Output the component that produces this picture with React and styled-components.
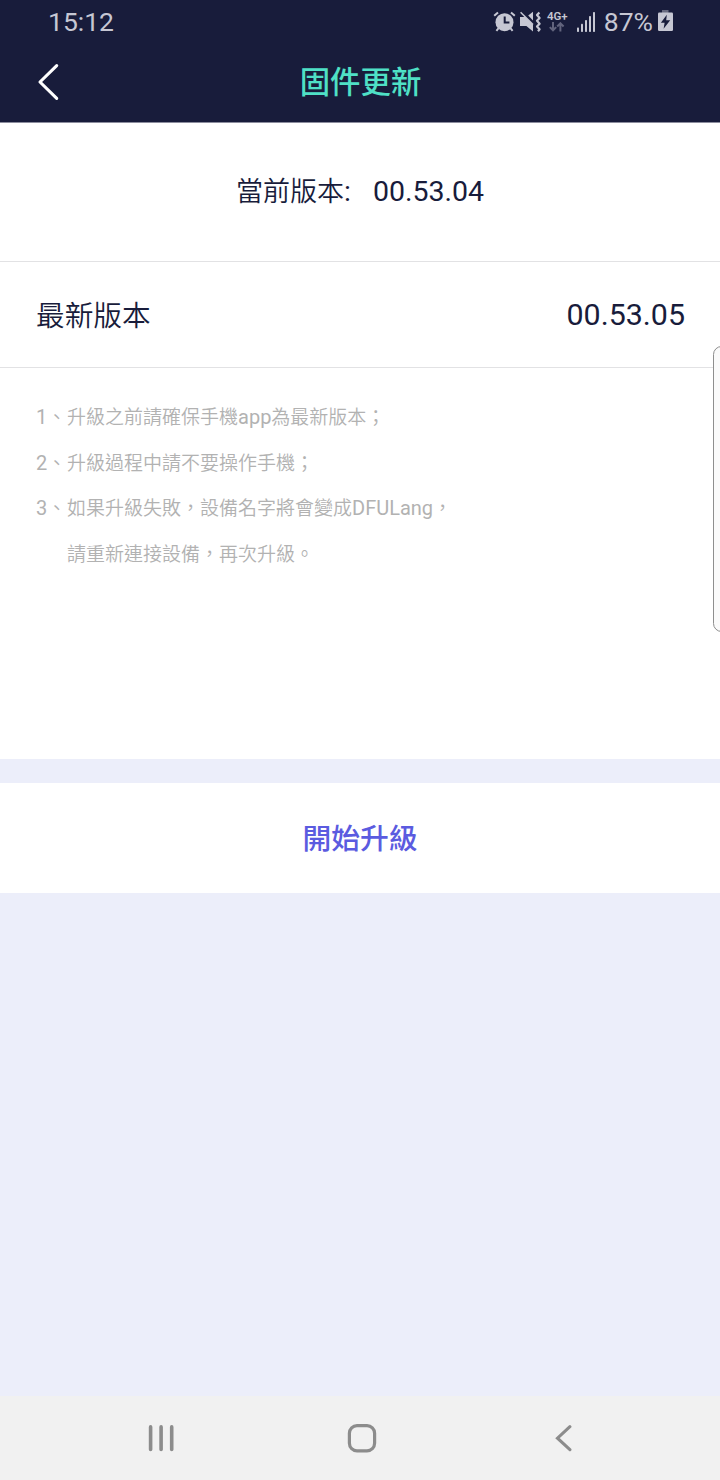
import React from 'react';
import styled, { createGlobalStyle } from 'styled-components';

const GlobalStyle = createGlobalStyle`
    * {
        box-sizing: border-box;
    }

    body {
        margin: 0;
        background-color: #eceefa;
        font-family: Roboto, 'Noto Sans CJK TC', sans-serif;
    }
`;

/* Status bar icons ----------------- */
const AlarmIcon = () => (
    <svg width="23" height="22" viewBox="0 0 23 22" fill="none">
        <circle cx="11.5" cy="11.2" r="9" fill="#c6c7d3" />
        <path d="M1.2 4.8 5 1.4M21.8 4.8 18 1.4M5.6 17.2 3.4 19.8M17.4 17.2l2.2 2.6" stroke="#c6c7d3" strokeWidth="2" />
        <path d="M11.7 5.6v5.9h4.7" stroke="#181c3b" strokeWidth="2" />
    </svg>
);

const VibrateIcon = () => (
    <svg width="23" height="22" viewBox="0 0 23 22" fill="none">
        <path d="M1 6h5.4L14 13.6v6.8L7.4 15H1z" fill="#c6c7d3" />
        <path d="M9.2 4.6 14 .8v8.6z" fill="#c6c7d3" />
        <path d="M1.6 1.2 14 13.6" stroke="#c6c7d3" strokeWidth="1.5" />
        <path d="M20.4 1.4 18 4l2.6 2.9L18 9.8l2.6 2.9-2.6 2.9 2.6 2.7-1.6 2" stroke="#c6c7d3" strokeWidth="2.2" strokeLinejoin="round" />
    </svg>
);

const DataArrows = () => (
    <svg width="16" height="10" viewBox="0 0 16 10" fill="none" stroke="#62647d" strokeWidth="2">
        <path d="M4 0v8M.8 5.1 4 8.3l3.2-3.2M11.4 9.5V1.5M8.2 4.5l3.2-3.2 3.2 3.2" />
    </svg>
);

const SignalIcon = () => (
    <svg width="18" height="20" viewBox="0 0 18 20" fill="#c6c7d3">
        <rect x="0" y="15.5" width="2" height="4.5" rx=".7" />
        <rect x="4" y="11.8" width="2" height="8.2" rx=".7" />
        <rect x="8" y="8" width="2" height="12" rx=".7" />
        <rect x="12" y="4" width="2" height="16" rx=".7" />
        <rect x="16" y="0" width="2" height="20" rx=".7" />
    </svg>
);

const BatteryIcon = () => (
    <svg width="15" height="23" viewBox="0 0 15 23">
        <path d="M4 0h6.5v3H4z" fill="#686a80" />
        <path d="M1.2 2.5H13.8Q15 2.5 15 3.7V19.8Q15 21 13.8 21H1.2Q0 21 0 19.8V3.7Q0 2.5 1.2 2.5z" fill="#c6c7d3" />
        <path d="M8.8 4.8 2.9 12.8H6.6L5.6 18.8 12.2 10.3H8.2z" fill="#181c3b" />
    </svg>
);

/* Notes mix Chinese with latin words, latin is set a bit larger */
const MixedText = ({ text }) =>
    text.split(/([A-Za-z0-9]+)/).map((part, i) =>
        i % 2 ? <Latin key={i}>{part}</Latin> : part
    );

const notes = [
    { number: '1', text: '升級之前請確保手機app為最新版本；' },
    { number: '2', text: '升級過程中請不要操作手機；' },
    { number: '3', text: '如果升級失敗，設備名字將會變成DFULang，' },
    { text: '請重新連接設備，再次升級。' },
];

const App = () => {
    return (
        <Screen>
            <GlobalStyle />
            <StatusBar>
                <StatusText>15:12</StatusText>
                <StatusIcons>
                    <AlarmIcon />
                    <VibrateIcon />
                    <Network>
                        <NetworkLabel>4G+</NetworkLabel>
                        <DataArrows />
                    </Network>
                    <SignalIcon />
                    <StatusText $level>87%</StatusText>
                    <BatteryIcon />
                </StatusIcons>
            </StatusBar>
            <Header>
                <BackButton aria-label="返回">
                    <svg width="24" height="38" viewBox="0 0 24 38" fill="none" stroke="#fff" strokeWidth="3.1" strokeLinecap="round" strokeLinejoin="round">
                        <path d="M20.7 2.6 4 19 20.7 35.4" />
                    </svg>
                </BackButton>
                <Title>固件更新</Title>
            </Header>
            <CurrentVersion>
                <CurrentLabel>當前版本<Colon>:</Colon></CurrentLabel>
                <Version $size="28.5px">00.53.04</Version>
            </CurrentVersion>
            <LatestVersion>
                <LatestLabel>最新版本</LatestLabel>
                <Version $size="30.4px">00.53.05</Version>
            </LatestVersion>
            <Notes>
                {notes.map((note) => (
                    <Note key={note.text}>
                        <NoteNumber>
                            {note.number && <><Latin>{note.number}</Latin>、</>}
                        </NoteNumber>
                        <span><MixedText text={note.text} /></span>
                    </Note>
                ))}
            </Notes>
            <UpgradeButton>開始升級</UpgradeButton>
            <NavBar>
                <NavButton aria-label="最近">
                    <svg width="26" height="28" viewBox="0 0 26 28" stroke="#8c8c8c" strokeWidth="3.6" strokeLinecap="round">
                        <path d="M2.6 2.9v22.6M13.1 2.9v22.6M23.7 2.9v22.6" />
                    </svg>
                </NavButton>
                <NavButton aria-label="主頁">
                    <svg width="30" height="30" viewBox="0 0 30 30" fill="none" stroke="#8c8c8c" strokeWidth="3.2">
                        <rect x="2.4" y="2.6" width="25.2" height="25.2" rx="7.6" />
                    </svg>
                </NavButton>
                <NavButton aria-label="返回">
                    <svg width="18" height="28" viewBox="0 0 18 28" fill="none" stroke="#8c8c8c" strokeWidth="3.1" strokeLinecap="round">
                        <path d="M15.9 2.7 3.5 14.2l12.4 11.5" />
                    </svg>
                </NavButton>
            </NavBar>
            <EdgeHandle />
        </Screen>
    );
}

export default App;

const Screen = styled.div`
    position: relative;
    display: flex;
    flex-direction: column;
    width: 720px;
    height: 1480px;
    overflow: hidden;
    background-color: #eceefa;
    color: #181c3b;
`;

const StatusBar = styled.div`
    display: flex;
    justify-content: space-between;
    align-items: center;
    height: 43px;
    padding: 0 47px 0 48px;
    background-color: #181c3b;
`;

const StatusText = styled.span`
    font-size: 26.5px;
    line-height: 43px;
    color: #c6c7d3;
    margin: ${props => props.$level ? '0 5px 0 9px' : '0'};
`;

const StatusIcons = styled.div`
    display: flex;
    align-items: center;

    svg {
        display: block;
        flex-shrink: 0;
    }

    svg + svg {
        margin-left: 3px;
    }
`;

const Network = styled.div`
    display: flex;
    flex-direction: column;
    align-items: center;
    width: 23px;
    margin: 0 8px 0 4px;
`;

const NetworkLabel = styled.span`
    font-size: 11.5px;
    font-weight: 600;
    line-height: 11px;
    color: #c6c7d3;
`;

const Header = styled.header`
    display: grid;
    grid-template-columns: 100px 1fr 100px;
    align-items: center;
    height: 80px;
    background-color: #181c3b;
    border-bottom: 1px solid #8c8d9e;
`;

const BackButton = styled.button`
    display: flex;
    padding: 0 0 2px 36px;
    border: 0;
    background: none;
`;

const Title = styled.h1`
    margin: 0;
    padding-left: 1px;
    font-size: 30.4px;
    font-weight: 500;
    line-height: 40px;
    text-align: center;
    color: #4fe0c6;
`;

const CurrentVersion = styled.section`
    display: flex;
    justify-content: center;
    height: 139px;
    padding-top: 49px;
    border-bottom: 1px solid #e2e2e4;
    background-color: #fff;
    line-height: 40px;
`;

const CurrentLabel = styled.span`
    margin-right: 22px;
    font-size: 27px;
    font-weight: 350;
`;

const Colon = styled.span`
    font-size: 28.5px;
    font-weight: 400;
`;

const Version = styled.span`
    font-size: ${props => props.$size};
`;

const LatestVersion = styled.section`
    display: flex;
    align-items: center;
    justify-content: space-between;
    height: 106px;
    padding: 0 35px 0 36px;
    border-bottom: 1px solid #e2e2e4;
    background-color: #fff;
`;

const LatestLabel = styled.span`
    padding-bottom: 2px;
    font-size: 28.7px;
    font-weight: 350;
`;

const Notes = styled.section`
    height: 391px;
    padding: 27px 36px 0;
    background-color: #fff;
    color: #b2b2b2;
`;

const Note = styled.div`
    display: flex;
    height: 45.5px;
    font-size: 19px;
    font-weight: 350;
    line-height: 45px;
    white-space: nowrap;
`;

const NoteNumber = styled.span`
    width: 31px;
`;

const Latin = styled.span`
    font-size: 20px;
    font-weight: 400;
`;

const UpgradeButton = styled.button`
    height: 110px;
    margin-top: 24px;
    padding: 0 0 4px;
    border: 0;
    background-color: #fff;
    font-family: inherit;
    font-size: 28.8px;
    font-weight: 500;
    color: #5b5be0;
`;

const NavBar = styled.nav`
    display: grid;
    grid-template-columns: 199px 207px 1fr;
    align-items: center;
    height: 84px;
    margin-top: auto;
    padding-left: 148px;
    background-color: #f1f1f1;
`;

const NavButton = styled.button`
    display: flex;
    padding: 0;
    border: 0;
    background: none;
`;

/* Edge panel handle, lies over the page at the right side */
const EdgeHandle = styled.div`
    position: absolute;
    top: 346px;
    right: -10px;
    width: 17px;
    height: 286px;
    border: 1px solid #8e8e8e;
    border-radius: 9px;
    background-color: #fafafa;
`;
